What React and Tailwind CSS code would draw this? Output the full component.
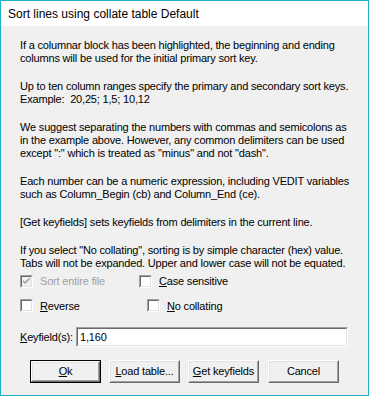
import React from 'react';

const font = { fontFamily: '"Liberation Sans", Arial, sans-serif' };

const paragraphs = [
    ['If a columnar block has been highlighted, the beginning and ending', 'columns will be used for the initial primary sort key.'],
    ['Up to ten column ranges specify the primary and secondary sort keys.', 'Example:  20,25; 1,5; 10,12'],
    [
        'We suggest separating the numbers with commas and semicolons as',
        'in the example above. However, any common delimiters can be used',
        'except ":" which is treated as "minus" and not "dash".',
    ],
    ['Each number can be a numeric expression, including VEDIT variables', 'such as Column_Begin (cb) and Column_End (ce).'],
    ['[Get keyfields] sets keyfields from delimiters in the current line.'],
    [
        'If you select "No collating", sorting is by simple character (hex) value.',
        'Tabs will not be expanded. Upper and lower case will not be equated.',
    ],
];

const CheckBox = ({ checked = false, disabled = false, children }) => (
    <div className="flex items-center gap-[7px]">
        <div className="w-[13px] h-[13px] border border-t-[#a0a0a0] border-l-[#a0a0a0] border-r-white border-b-white">
            <div className={`w-full h-full border border-t-[#696969] border-l-[#696969] border-r-[#e3e3e3] border-b-[#e3e3e3] flex items-center justify-center ${disabled ? 'bg-[#f0f0f0]' : 'bg-white'}`}>
                {checked && (
                    <svg width="7" height="7" viewBox="0 0 7 7">
                        <path d="M0 2 L0 4 L2 6 L7 1 L7 -1 L2 4 Z" fill={disabled ? '#a0a0a0' : '#000'} />
                    </svg>
                )}
            </div>
        </div>
        <span className={disabled ? 'text-[#a0a0a0]' : 'text-black'}>{children}</span>
    </div>
);

const Button = ({ children, isDefault = false }) => (
    <div className={`w-[71px] h-[23px] ${isDefault ? 'border border-[#000]' : ''}`}>
        <div className="w-full h-full border border-t-white border-l-white border-r-[#696969] border-b-[#696969]">
            <div className="w-full h-full border border-t-[#e3e3e3] border-l-[#e3e3e3] border-r-[#a0a0a0] border-b-[#a0a0a0] bg-[#f0f0f0] flex items-center justify-center">
                {children}
            </div>
        </div>
    </div>
);

export default function App() {
    return (
        <div className="w-[369px] h-[396px] border border-[#1cb0c8] flex flex-col bg-white text-black" style={font}>
            <div className="h-[25px] bg-white flex items-center pl-[7px] text-[12px]">
                Sort lines using collate table Default
            </div>
            <div className="flex-1 bg-[#f0f0f0] px-[19px] pt-[13px] text-[11px] tracking-[-0.18px]">
                <div className="flex flex-col gap-[15px] leading-[13px]">
                    {paragraphs.map((p, i) => (
                        <div key={i} className="whitespace-pre">
                            {p.map((line, j) => (
                                <div key={j}>{line}</div>
                            ))}
                        </div>
                    ))}
                </div>
                <div className="mt-[3px] flex flex-col gap-[8px]">
                    <div className="flex">
                        <div className="w-[119px]">
                            <CheckBox checked disabled>Sort entire file</CheckBox>
                        </div>
                        <CheckBox><span className="underline">C</span>ase sensitive</CheckBox>
                    </div>
                    <div className="flex">
                        <div className="w-[127px]">
                            <CheckBox><span className="underline">R</span>everse</CheckBox>
                        </div>
                        <CheckBox><span className="underline">N</span>o collating</CheckBox>
                    </div>
                </div>
                <div className="mt-[13px] flex items-center">
                    <span className="w-[56px]"><span className="underline">K</span>eyfield(s):</span>
                    <div className="w-[272px] h-[20px] border border-t-[#a0a0a0] border-l-[#a0a0a0] border-r-white border-b-white">
                        <div className="w-full h-full border border-t-[#696969] border-l-[#696969] border-r-[#e3e3e3] border-b-[#e3e3e3] bg-white flex items-center px-[2px]">
                            1,160
                        </div>
                    </div>
                </div>
                <div className="mt-[13px] flex pl-[10px] gap-[8px]">
                    <Button isDefault><span><span className="underline">O</span>k</span></Button>
                    <Button><span><span className="underline">L</span>oad table...</span></Button>
                    <Button><span><span className="underline">G</span>et keyfields</span></Button>
                    <div className="ml-[1px]">
                        <Button>Cancel</Button>
                    </div>
                </div>
            </div>
        </div>
    );
}
